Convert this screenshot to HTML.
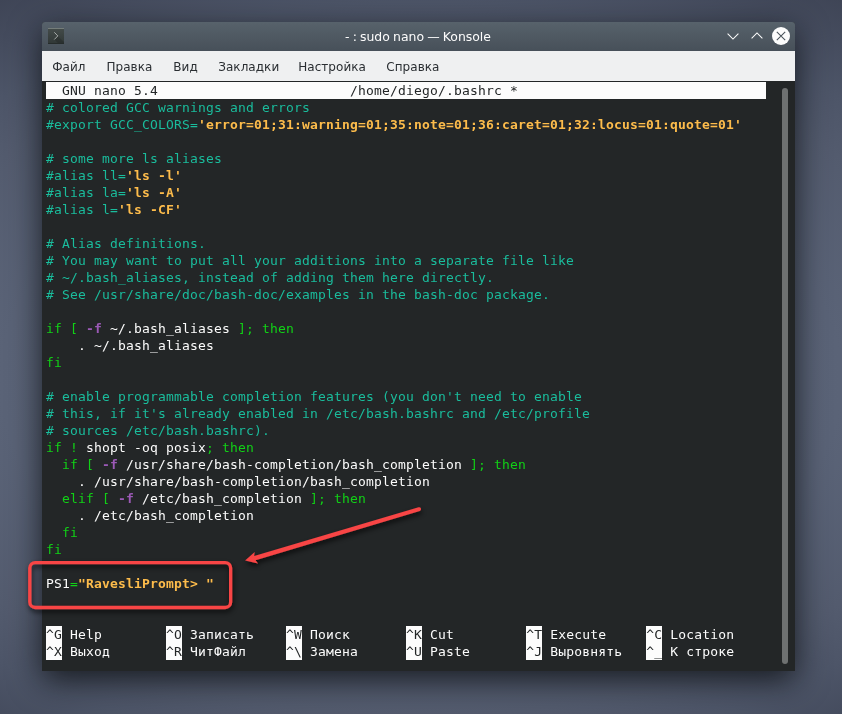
<!DOCTYPE html>
<html lang="ru"><head><meta charset="utf-8"><title>sudo nano — Konsole</title>
<style>
html,body{margin:0;padding:0}
body{width:842px;height:714px;overflow:hidden;position:relative;background:#454c5e;
background-image:radial-gradient(ellipse 700px 420px at 421px 380px,#646e83 0%,#5a6377 60%,#535b6e 80%,#4d5568 90%,#454c5e 100%,#3e4455 110%,#383e4e 120%);
font-family:"DejaVu Sans","Liberation Sans",sans-serif}
.win{will-change:transform;position:absolute;left:42px;top:22px;width:753px;height:649px;border-radius:3px 3px 0 0;
box-shadow:0 9px 32px 0 rgba(8,10,12,.8);background:#232627}
.tb{position:absolute;left:0;top:0;width:753px;height:29px;border-radius:3px 3px 0 0;
background:linear-gradient(#57626b,#475059)}
.tt{position:absolute;left:-0.5px;width:753px;top:0;height:29px;line-height:30px;text-align:center;color:#fcfcfc;font-size:12.45px;word-spacing:-0.8px}
.mb{position:absolute;left:0;top:29px;width:753px;height:30px;background:#eff0f1}
.mb span{position:absolute;top:0;line-height:32px;font-size:12px;color:#2a2e32;white-space:pre;letter-spacing:.05px}
.term{position:absolute;left:0;top:59px;width:753px;height:590px;background:#232627;overflow:hidden}
.r{position:absolute;left:4px;height:17px;line-height:17px;white-space:pre;color:#fcfcfc;
font-family:"DejaVu Sans Mono","Liberation Mono",monospace;font-size:13px;letter-spacing:0.1734px}
.t{background:#fcfcfc;color:#232627;width:720px}
.c{color:#1abc9c} .o{color:#fdbc4b;font-weight:bold} .g{color:#11d116} .p{color:#9b59b6;font-weight:bold}
.k{background:#fcfcfc;color:#232627;display:inline-block;height:17px;line-height:17px;vertical-align:top}
.sb{position:absolute;left:740px;top:7px;width:6px;height:576px;border-radius:3px;background:#6e7171}
svg{position:absolute;left:0;top:0}
</style></head><body>
<div class="win">
 <div class="tb"></div>
 <div class="tt">- : sudo nano — Konsole</div>
 <div class="mb"><span style="left:10.2px">Файл</span><span style="left:64.4px">Правка</span><span style="left:131.3px">Вид</span><span style="left:176.2px">Закладки</span><span style="left:256.2px">Настройка</span><span style="left:344.3px">Справка</span></div>
 <div class="term">
<div class="r t" style="top:1px">  GNU nano 5.4                        /home/diego/.bashrc *                               </div>
<div class="r" style="top:18px"><span class="c"># colored GCC warnings and errors</span></div>
<div class="r" style="top:35px"><span class="c">#export GCC_COLORS=</span><span class="o">&#x27;error=01;31:warning=01;35:note=01;36:caret=01;32:locus=01:quote=01&#x27;</span></div>
<div class="r" style="top:69px"><span class="c"># some more ls aliases</span></div>
<div class="r" style="top:86px"><span class="c">#alias ll=</span><span class="o">&#x27;ls -l&#x27;</span></div>
<div class="r" style="top:103px"><span class="c">#alias la=</span><span class="o">&#x27;ls -A&#x27;</span></div>
<div class="r" style="top:120px"><span class="c">#alias l=</span><span class="o">&#x27;ls -CF&#x27;</span></div>
<div class="r" style="top:154px"><span class="c"># Alias definitions.</span></div>
<div class="r" style="top:171px"><span class="c"># You may want to put all your additions into a separate file like</span></div>
<div class="r" style="top:188px"><span class="c"># ~/.bash_aliases, instead of adding them here directly.</span></div>
<div class="r" style="top:205px"><span class="c"># See /usr/share/doc/bash-doc/examples in the bash-doc package.</span></div>
<div class="r" style="top:239px"><span class="g">if [</span> <span class="p">-f</span> ~/.bash_aliases <span class="g">];</span><span class="g"> then</span></div>
<div class="r" style="top:256px">    . ~/.bash_aliases</div>
<div class="r" style="top:273px"><span class="g">fi</span></div>
<div class="r" style="top:307px"><span class="c"># enable programmable completion features (you don&#x27;t need to enable</span></div>
<div class="r" style="top:324px"><span class="c"># this, if it&#x27;s already enabled in /etc/bash.bashrc and /etc/profile</span></div>
<div class="r" style="top:341px"><span class="c"># sources /etc/bash.bashrc).</span></div>
<div class="r" style="top:358px"><span class="g">if !</span> shopt -oq posix<span class="g">; then</span></div>
<div class="r" style="top:375px"><span class="g">  if [</span> <span class="p">-f</span> /usr/share/bash-completion/bash_completion <span class="g">]; then</span></div>
<div class="r" style="top:392px">    . /usr/share/bash-completion/bash_completion</div>
<div class="r" style="top:409px"><span class="g">  elif [</span> <span class="p">-f</span> /etc/bash_completion <span class="g">]; then</span></div>
<div class="r" style="top:426px">    . /etc/bash_completion</div>
<div class="r" style="top:443px"><span class="g">  fi</span></div>
<div class="r" style="top:460px"><span class="g">fi</span></div>
<div class="r" style="top:494px">PS1<span class="g">=</span><span class="o">&quot;RavesliPrompt&gt; &quot;</span></div>
<div class="r" style="top:545px"><span class="k">^G</span> Help        <span class="k">^O</span> Записать    <span class="k">^W</span> Поиск       <span class="k">^K</span> Cut         <span class="k">^T</span> Execute     <span class="k">^C</span> Location</div>
<div class="r" style="top:562px"><span class="k">^X</span> Выход       <span class="k">^R</span> ЧитФайл     <span class="k">^\</span> Замена      <span class="k">^U</span> Paste       <span class="k">^J</span> Выровнять   <span class="k">^_</span> К строке</div>
  <div class="sb"></div>
 </div>
</div>
<svg width="842" height="714" viewBox="0 0 842 714">
 <defs>
  <linearGradient id="ig" x1="0" y1="0" x2="0" y2="1"><stop offset="0" stop-color="#444c4a"/><stop offset="1" stop-color="#303736"/></linearGradient>
  <filter id="sh" x="-20%" y="-20%" width="140%" height="160%"><feGaussianBlur in="SourceAlpha" stdDeviation="2.5"/><feOffset dx="1" dy="3"/><feComponentTransfer><feFuncA type="linear" slope="0.7"/></feComponentTransfer><feMerge><feMergeNode/><feMergeNode in="SourceGraphic"/></feMerge></filter>
 </defs>
 <!-- app icon -->
 <rect x="48" y="28" width="16" height="16" fill="url(#ig)"/>
 <rect x="48" y="28" width="16" height="1" fill="#757d7a"/>
 <rect x="48" y="43" width="16" height="1" fill="#262c2b"/>
 <polygon points="57.8,35.9 64,42.1 64,43 57.8,43 54.3,39.5" fill="rgba(0,0,0,.14)"/>
 <polyline points="54.3,32.3 57.8,35.9 54.3,39.5" fill="none" stroke="#b4b9b7" stroke-width="0.9"/>
 <!-- window buttons -->
 <polyline points="727.6,33.6 733,39 738.4,33.6" fill="none" stroke="#fcfcfc" stroke-width="1.05"/>
 <polyline points="751.6,38.4 757,33 762.4,38.4" fill="none" stroke="#fcfcfc" stroke-width="1.05"/>
 <circle cx="781" cy="36" r="9" fill="#fcfcfc"/>
 <path d="M776.8 31.8 L785.2 40.2 M785.2 31.8 L776.8 40.2" stroke="#4a535b" stroke-width="1.05" fill="none"/>
 <!-- annotation -->
 <g filter="url(#sh)">
  <rect x="29.8" y="562.6" width="200.85" height="44.9" rx="5.5" ry="5.5" fill="none" stroke="#f84545" stroke-width="3.3"/>
  <path d="M245.1 560.4 L254.7 552 L254.2 556 L418.6 507.2 A2 2 0 0 1 419.8 511 L255.6 560.3 L258 563.4 Z" fill="#f84545"/>
 </g>
</svg>
</body></html>
